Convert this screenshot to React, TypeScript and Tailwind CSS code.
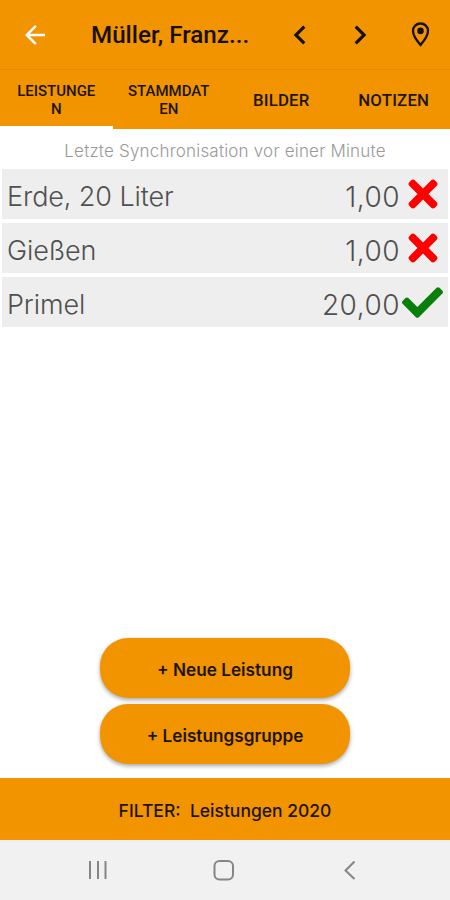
import { FaCheck, FaTimes } from "react-icons/fa";
import { MdArrowBack, MdChevronLeft, MdChevronRight } from "react-icons/md";
import clsx from "clsx";
import { useState } from "react";

interface ServiceProps {
  name: string;
  amount: string;
  done: boolean;
}

const services: ServiceProps[] = [
  { name: "Erde, 20 Liter", amount: "1,00", done: false },
  { name: "Gießen", amount: "1,00", done: false },
  { name: "Primel", amount: "20,00", done: true },
];

const tabs = [
  { id: "leistungen", lines: ["LEISTUNGE", "N"] },
  { id: "stammdaten", lines: ["STAMMDAT", "EN"] },
  { id: "bilder", lines: ["BILDER"] },
  { id: "notizen", lines: ["NOTIZEN"] },
];

function PinIcon() {
  return (
    <svg width="29" height="29" viewBox="0 0 24 24" fill="none">
      <path
        d="M12 2.900c-3.500 0-6.200 2.700-6.200 6.200C5.800 13.500 12 20.600 12 20.600s6.200-7.100 6.200-11.500c0-3.500-2.700-6.200-6.200-6.200z"
        stroke="currentColor"
        strokeWidth="1.900"
      />
      <circle cx="12" cy="9" r="2.700" fill="currentColor" />
    </svg>
  );
}

function Header() {
  return (
    <header className="flex h-[69px] shrink-0 items-center pr-[15px] pl-5 text-[#151000]">
      <button className="text-white">
        <MdArrowBack size={30} />
      </button>
      <h1 className="ml-[41px] w-[168px] pt-px text-[24.2px] leading-8 font-medium whitespace-nowrap">
        Müller, Franz...
      </h1>
      <button className="ml-[22px]">
        <MdChevronLeft size={38} />
      </button>
      <button className="ml-[22px]">
        <MdChevronRight size={38} />
      </button>
      <button className="ml-auto">
        <PinIcon />
      </button>
    </header>
  );
}

function Tabs() {
  const [selected, setSelected] = useState<string>("leistungen");

  return (
    <nav className="grid h-[60px] shrink-0 grid-cols-4 border-t border-[#e08a05] text-[#1c1400]">
      {tabs.map((tab) => (
        <button
          key={tab.id}
          onClick={() => setSelected(tab.id)}
          className={clsx(
            "flex flex-col items-center justify-center border-b-[3px] font-medium",
            tab.lines.length > 1
              ? "pt-[5px] text-[15px] leading-[17.5px]"
              : "pt-[3px] text-[16.8px] leading-5 tracking-[0.2px]",
            selected === tab.id ? "border-white" : "border-transparent"
          )}
        >
          {tab.lines.map((line) => (
            <span key={line}>{line}</span>
          ))}
        </button>
      ))}
    </nav>
  );
}

function ServiceRow({ name, amount, done }: ServiceProps) {
  return (
    <li className="flex h-[50px] items-center bg-[#eeeeee] pl-[5px] text-[27px] leading-[48px] font-light text-[#505050]">
      <span className="pt-[6px] tracking-[-0.1px]">{name}</span>
      <span className="ml-auto pt-[5px] text-[28px] tracking-[0.5px]">
        {amount}
      </span>
      <span className="flex w-12 justify-center pr-[3px]">
        {done ? (
          <FaCheck size={41} className="text-[#088008]" />
        ) : (
          <FaTimes size={42} className="text-[#ff0000]" />
        )}
      </span>
    </li>
  );
}

function ActionButton({ label }: { label: string }) {
  return (
    <button className="h-[60px] w-[250px] rounded-[28px] bg-[#f29400] pt-1 text-[17.2px] font-semibold text-[#1c1400] shadow-[0_2px_4px_rgba(0,0,0,0.35)]">
      {label}
    </button>
  );
}

function SystemBar() {
  return (
    <footer className="flex h-[60px] shrink-0 items-center bg-[#f1f1f1] pr-[89px] pl-[83px] text-[#858585]">
      <svg width="30" height="30" viewBox="0 0 30 30" stroke="currentColor" strokeWidth="2">
        <path d="M7 6v18M15 6v18M22.500 6v18" />
      </svg>
      <svg className="ml-24" width="30" height="30" viewBox="0 0 30 30" fill="none" stroke="currentColor" strokeWidth="2">
        <rect x="5.500" y="6" width="18.500" height="18.500" rx="5" />
      </svg>
      <svg className="ml-auto" width="22" height="30" viewBox="0 0 22 30" fill="none" stroke="currentColor" strokeWidth="2">
        <path d="M15.500 6.500L6.500 15.500l9 8.500" />
      </svg>
    </footer>
  );
}

export default function App() {
  return (
    <div className="flex h-[900px] w-[450px] flex-col overflow-hidden bg-white font-['Inter',sans-serif]">
      <div className="bg-[#f29400] font-['Roboto',sans-serif]">
        <Header />
        <Tabs />
      </div>
      <main className="flex flex-1 flex-col">
        <p className="h-10 pt-[2px] text-center text-[17px] leading-10 font-light tracking-[0.2px] text-[#999999]">
          Letzte Synchronisation vor einer Minute
        </p>
        <ul className="flex flex-col gap-1 px-[2px]">
          {services.map((service, index) => (
            <ServiceRow key={index} {...service} />
          ))}
        </ul>
        <div className="mt-auto mb-[14px] flex flex-col items-center gap-[6px]">
          <ActionButton label="+ Neue Leistung" />
          <ActionButton label="+ Leistungsgruppe" />
        </div>
      </main>
      <button className="h-[62px] shrink-0 bg-[#f29400] pt-1 text-[17.5px] font-medium text-[#1c1400]">
        FILTER: &nbsp;Leistungen 2020
      </button>
      <SystemBar />
    </div>
  );
}
